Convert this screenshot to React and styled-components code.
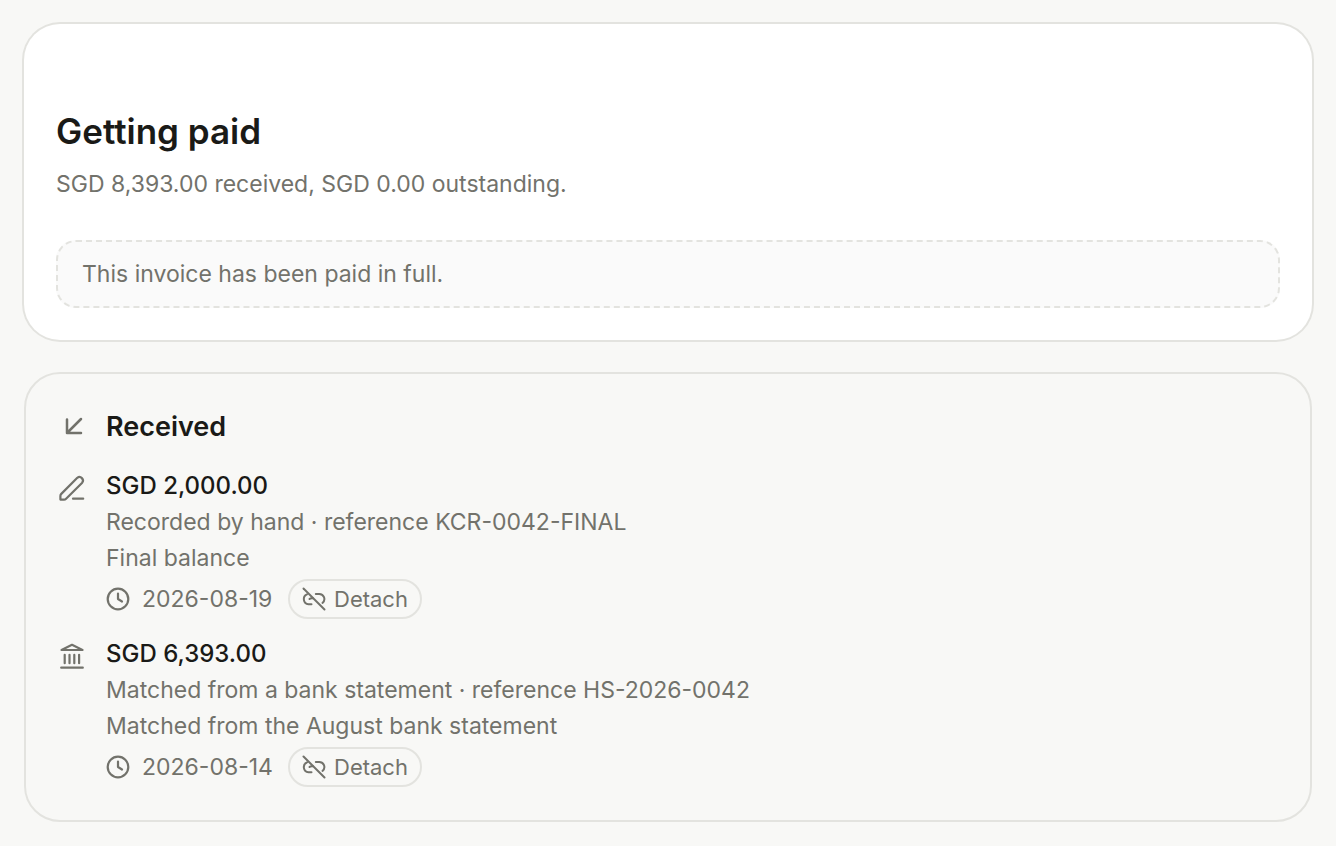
import React from "react";
import styled, { createGlobalStyle } from "styled-components";

const GlobalStyle = createGlobalStyle`
  * {
    box-sizing: border-box;
  }

  body {
    margin: 0;
    background-color: #f8f8f6;
    color: #1a1a17;
    font-family: Inter, "Liberation Sans", sans-serif;
    font-size: 23px;
    line-height: 36px;
  }

  h2, h3, p, ul {
    margin: 0;
    padding: 0;
  }
`;

const Page = styled.main`
  display: flex;
  flex-direction: column;
  gap: 32px;
  padding: 24px;
`;

const PaidCard = styled.section`
  padding: 84px 32px 32px;
  border-radius: 36px;
  background-color: #ffffff;
  box-shadow: 0 0 0 2px #e3e3df;
`;

const PaidTitle = styled.h2`
  font-size: 35px;
  font-weight: 600;
  line-height: 46px;
`;

const Summary = styled.p`
  margin-top: 12px;
  color: #72726b;
`;

const Notice = styled.p`
  margin-top: 38px;
  padding: 14px 24px;
  border: 2px dashed #e3e3df;
  border-radius: 20px;
  background-color: #fafafa;
  color: #72726b;
`;

const ReceivedCard = styled.section`
  padding: 32px;
  border: 2px solid #e3e3df;
  border-radius: 36px;
`;

const ReceivedHeader = styled.div`
  display: flex;
  align-items: center;
  gap: 20px;
  height: 42px;
  color: #72726b;
`;

const ReceivedTitle = styled.h3`
  color: #1a1a17;
  font-size: 27px;
  font-weight: 600;
`;

const PaymentList = styled.ul`
  display: flex;
  flex-direction: column;
  gap: 16px;
  margin-top: 20px;
  list-style: none;
`;

const Payment = styled.li`
  display: flex;
  gap: 20px;
  color: #72726b;
`;

const PaymentIcon = styled.span`
  display: flex;
  padding-top: 6px;
  height: 36px;
`;

const Amount = styled.p`
  color: #1a1a17;
  font-size: 24px;
  font-weight: 500;
`;

const Meta = styled.div`
  display: flex;
  align-items: center;
  gap: 12px;
  height: 42px;
  margin-top: 2px;
`;

const PaidOn = styled.time`
  min-width: 134px;
`;

const DetachButton = styled.button`
  display: flex;
  align-items: center;
  gap: 8px;
  height: 40px;
  padding: 0 12px;
  border: 2px solid #e3e3df;
  border-radius: 20px;
  background-color: transparent;
  color: inherit;
  font: inherit;
  font-size: 22px;
  cursor: pointer;
`;

const Svg = styled.svg`
  flex: none;
  fill: none;
  stroke: currentColor;
  stroke-width: ${(props) => props.$weight || 2.2};
  stroke-linecap: round;
  stroke-linejoin: round;
`;

const ArrowIcon = () => (
  <Svg $weight={2.5} width="28" height="28" viewBox="0 0 28 28" aria-hidden="true">
    <path d="M23 6 9 20M9 6.500V20h14" />
  </Svg>
);

const PenIcon = () => (
  <Svg width="28" height="28" viewBox="0 0 28 28" aria-hidden="true">
    <path d="M2.400 25.600V22c0-.8.300-1.500.9-2.100L19.300 3.800a3.500 3.500 0 0 1 4.900 4.900L8.100 24.700c-.6.6-1.300.9-2.100.9Z" />
    <path d="M15 24.700h10.200" />
  </Svg>
);

const BankIcon = () => (
  <Svg width="28" height="28" viewBox="0 0 28 28" aria-hidden="true">
    <path d="M3.500 8 14 2.800 24.500 8Z" />
    <path d="M6.700 12.800v8.400M11.500 12.800v8.400M16.300 12.800v8.400M21.100 12.800v8.400" />
    <path d="M3.200 25.700h21.600" />
  </Svg>
);

const ClockIcon = () => (
  <Svg width="24" height="24" viewBox="0 0 24 24" aria-hidden="true">
    <circle cx="12" cy="12" r="10.300" />
    <path d="M12 6.500V12l4 2.500" />
  </Svg>
);

const UnlinkIcon = () => (
  <Svg $weight={2} width="24" height="24" viewBox="0 0 24 24" aria-hidden="true">
    <path d="M1.500 1.500 22.500 22.500" />
    <path d="M5 7.400A5.100 5.100 0 0 0 6.500 17.200h3" />
    <path d="M7.500 12c.5-.5 1.300-.8 2.200-.8h1.300" />
    <path d="M13.800 6.900h3.300a5.100 5.100 0 0 1 3.400 9" />
  </Svg>
);

const payments = [
  {
    id: 1,
    icon: <PenIcon />,
    amount: "SGD 2,000.00",
    source: "Recorded by hand · reference KCR-0042-FINAL",
    note: "Final balance",
    date: "2026-08-19",
  },
  {
    id: 2,
    icon: <BankIcon />,
    amount: "SGD 6,393.00",
    source: "Matched from a bank statement · reference HS-2026-0042",
    note: "Matched from the August bank statement",
    date: "2026-08-14",
  },
];

const App = () => {
  return (
    <>
      <GlobalStyle />
      <Page>
        <PaidCard>
          <PaidTitle>Getting paid</PaidTitle>
          <Summary>SGD 8,393.00 received, SGD 0.00 outstanding.</Summary>
          <Notice>This invoice has been paid in full.</Notice>
        </PaidCard>
        <ReceivedCard>
          <ReceivedHeader>
            <ArrowIcon />
            <ReceivedTitle>Received</ReceivedTitle>
          </ReceivedHeader>
          <PaymentList>
            {payments.map((payment) => (
              <Payment key={payment.id}>
                <PaymentIcon>{payment.icon}</PaymentIcon>
                <div>
                  <Amount>{payment.amount}</Amount>
                  <p>{payment.source}</p>
                  <p>{payment.note}</p>
                  <Meta>
                    <ClockIcon />
                    <PaidOn dateTime={payment.date}>{payment.date}</PaidOn>
                    <DetachButton type="button">
                      <UnlinkIcon />
                      Detach
                    </DetachButton>
                  </Meta>
                </div>
              </Payment>
            ))}
          </PaymentList>
        </ReceivedCard>
      </Page>
    </>
  );
};

export default App;
